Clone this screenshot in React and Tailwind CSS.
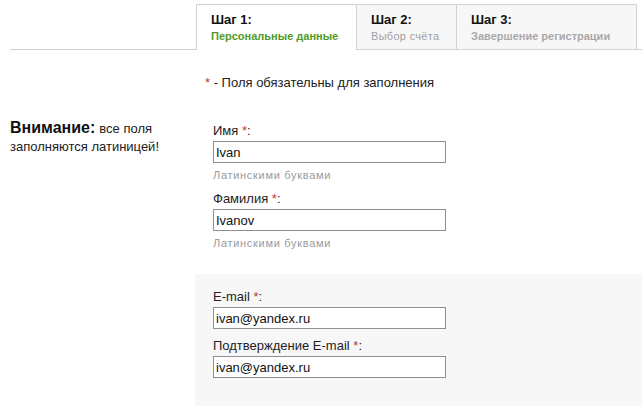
import React from "react";

const font = { fontFamily: '"Liberation Sans", Arial, sans-serif' };

function Star() {
  return <span className="text-[#c0392b]">*</span>;
}

function Field({ label, value, hint, first }) {
  return (
    <div className={first ? "" : "mt-[9px]"}>
      <div className="text-[13px] leading-[16px] text-[#222] mb-[2px]">
        {label} <Star />:
      </div>
      <input
        readOnly
        value={value}
        className="block w-[233px] h-[22px] border border-[#8f8f8f] bg-white px-[2px] text-[13px] text-[#111] outline-none"
        style={font}
      />
      {hint && (
        <div className="mt-[5px] text-[11px] leading-[14px] text-[#9a9a9a] tracking-[0.7px]">
          {hint}
        </div>
      )}
    </div>
  );
}

export default function App() {
  return (
    <div className="w-[642px] h-[406px] overflow-hidden bg-white" style={font}>
      {/* Header tabs */}
      <div className="flex items-end pt-[4px]">
        <div className="ml-[10px] w-[186px] h-[46px] border-b border-[#d2d2d2]" />
        <div className="w-[161px] h-[46px] border-l border-t border-r border-[#d2d2d2] bg-white pl-[14px] pt-[7px]">
          <div className="text-[13px] leading-[16px] font-bold text-[#111]">Шаг 1:</div>
          <div className="text-[11px] leading-[16px] font-bold text-[#4f9a28]">Персональные данные</div>
        </div>
        <div className="w-[100px] h-[46px] border-t border-r border-b border-[#d2d2d2] bg-[#f7f7f7] pl-[14px] pt-[7px]">
          <div className="text-[13px] leading-[16px] font-bold text-[#111]">Шаг 2:</div>
          <div className="text-[11px] leading-[16px] text-[#a0a0a0] tracking-[0.3px]">Выбор счёта</div>
        </div>
        <div className="w-[180px] h-[46px] border-t border-r border-b border-[#d2d2d2] bg-[#f7f7f7] pl-[14px] pt-[7px]">
          <div className="text-[13px] leading-[16px] font-bold text-[#111]">Шаг 3:</div>
          <div className="text-[11px] leading-[16px] font-bold text-[#a8a8a8]">Завершение регистрации</div>
        </div>
        <div className="flex-1 h-[46px] border-b border-[#d2d2d2]" />
      </div>

      {/* Note */}
      <div className="ml-[205px] mt-[25px] text-[13px] leading-[16px] text-[#222]">
        <Star /> - Поля обязательны для заполнения
      </div>

      {/* Main row */}
      <div className="flex mt-[27px]">
        <div className="w-[185px] ml-[10px] text-[13px] text-[#222]">
          <div className="flex items-baseline gap-[4px] h-[19px]">
            <span className="text-[16px] leading-[19px] font-bold text-[#111]">Внимание:</span>
            <span className="leading-[19px]">все поля</span>
          </div>
          <div className="leading-[19px]">заполняются латиницей!</div>
        </div>
        <div className="flex-1">
          <div className="pl-[18px] pt-[5px] pb-[24px]">
            <Field first label="Имя" value="Ivan" hint="Латинскими буквами" />
            <Field label="Фамилия" value="Ivanov" hint="Латинскими буквами" />
          </div>
          <div className="bg-[#f7f7f7] pl-[18px] pt-[15px] h-[140px]">
            <Field first label="E-mail" value="ivan@yandex.ru" />
            <Field label="Подтверждение E-mail" value="ivan@yandex.ru" />
          </div>
        </div>
      </div>
    </div>
  );
}
